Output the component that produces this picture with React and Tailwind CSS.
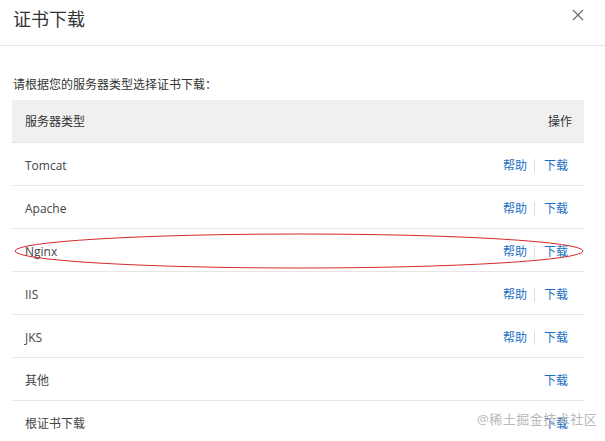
import React from "react";

const ROWS = [
  { name: "Tomcat", help: true },
  { name: "Apache", help: true },
  { name: "Nginx", help: true },
  { name: "IIS", help: true },
  { name: "JKS", help: true },
  { name: "其他", help: false },
  { name: "根证书下载", help: false },
];

const FONT = { fontFamily: '"Open Sans", "Noto Sans CJK SC", sans-serif' };

const App = () => {
  return (
    <div
      className="relative w-[605px] h-[441px] overflow-hidden bg-white text-[#333]"
      style={FONT}
    >
      {/* HEADER */}
      <div className="h-[46px] flex items-center justify-between pl-[13px] pr-[21px] border-b border-[#e5e5e5]">
        <span className="text-[18px] leading-none text-[#333] -mt-[8px]">证书下载</span>
        <svg width="12" height="12" viewBox="0 0 12 12" className="-mt-[15px]">
          <path d="M1 1 L11 11 M11 1 L1 11" stroke="#666" strokeWidth="1.1" />
        </svg>
      </div>

      {/* BODY */}
      <div className="pt-[30px] px-[12px] pr-[21px]">
        <p className="text-[12px] leading-[18px] pl-[1px] mb-[6px] text-[#333]">
          请根据您的服务器类型选择证书下载：
        </p>

        <div className="text-[12px]">
          <div className="h-[43px] pt-[1px] bg-[#f0f0f0] flex items-center justify-between px-[13px] pr-[12px] border-b border-[#e6e6e6]">
            <span>服务器类型</span>
            <span>操作</span>
          </div>
          {ROWS.map((row) => (
            <div
              key={row.name}
              className="h-[43px] pt-[3px] flex items-center justify-between pl-[13px] pr-[16px] border-b border-[#e6e6e6]"
            >
              <span className="text-[#444]">{row.name}</span>
              <div className="flex items-center text-[#1a6fc4]">
                {row.help && (
                  <>
                    <span>帮助</span>
                    <span className="w-px h-[14px] bg-[#ddd] ml-[7px] mr-[9px]" />
                  </>
                )}
                <span>下载</span>
              </div>
            </div>
          ))}
        </div>
      </div>

      {/* annotation ellipse */}
      <svg
        className="absolute left-0 top-0 pointer-events-none"
        width="605"
        height="441"
      >
        <ellipse cx="299" cy="251" rx="284" ry="17" fill="none" stroke="#d42a2a" strokeWidth="1" />
      </svg>

      {/* watermark */}
      <span className="absolute left-[477px] top-[410px] text-[13px] text-[#b8b8b8] tracking-[0.5px]">
        @稀土掘金技术社区
      </span>
    </div>
  );
};

export default App;
